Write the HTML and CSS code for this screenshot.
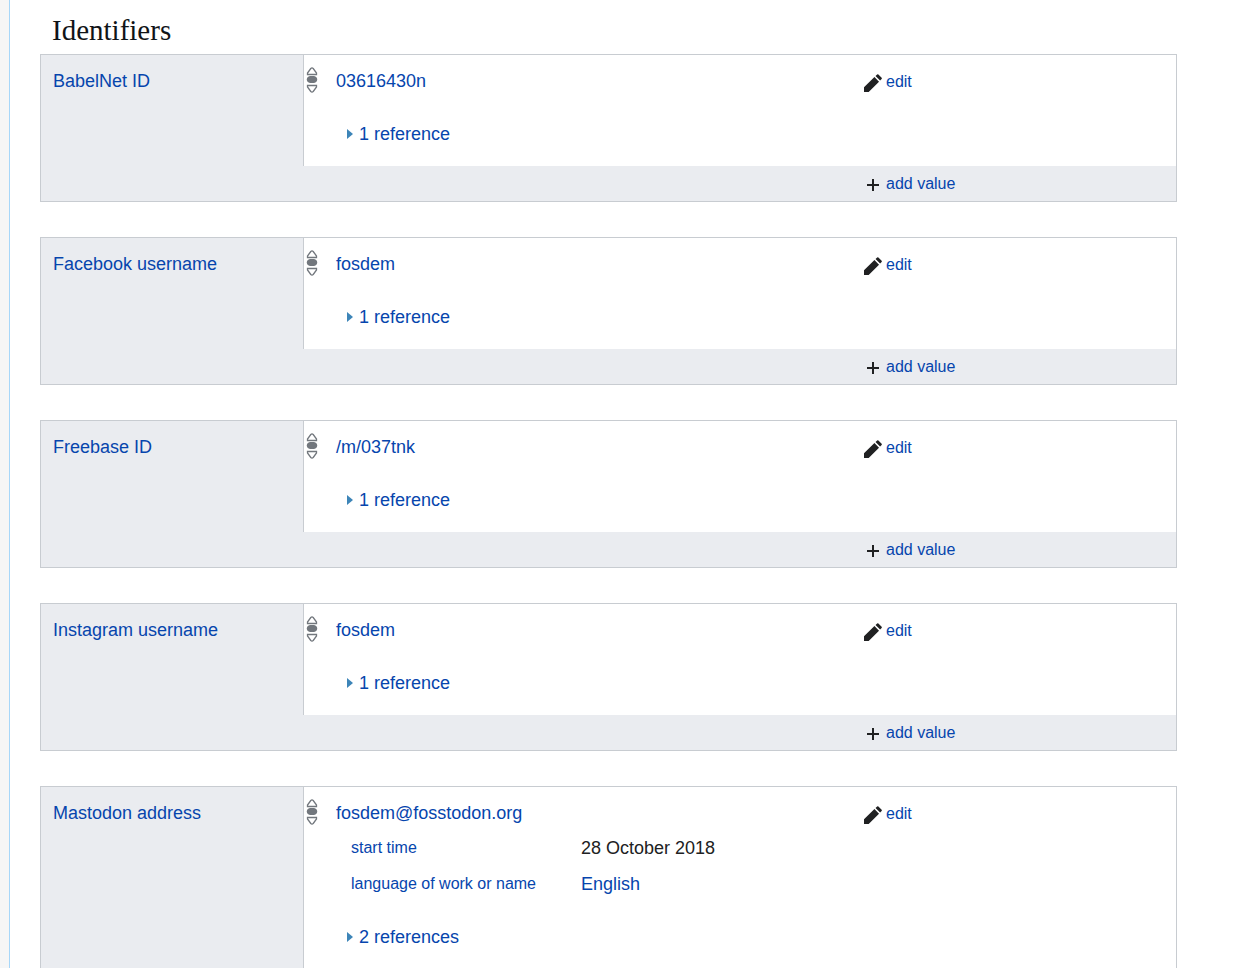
FILE: index.html
```html
<!DOCTYPE html>
<html lang="en">
<head>
    <meta charset="UTF-8">
    <meta name="viewport" content="width=device-width, initial-scale=1.0">
    <title>FOSDEM - Identifiers</title>
    <link rel="stylesheet" href="styles.css">
</head>
<body>
    <!-- Shared icons -->
    <svg class="icon-defs" aria-hidden="true">
        <symbol id="icon-rank" viewBox="0 0 12 26">
            <path d="M1.500 7.500 V6 L4.800 1.500 Q6 .300 7.200 1.500 L10.500 6 V7.500 Z" fill="#fff" stroke="#72777d" stroke-width="1.300"/>
            <path d="M4 9 H8 Q11.200 9.800 11.200 12.500 Q11.200 15.200 8 16 H4 Q.800 15.200 .800 12.500 Q.800 9.800 4 9 Z" fill="#72777d"/>
            <path d="M1.500 18.500 V20 L4.800 24.500 Q6 25.700 7.200 24.500 L10.500 20 V18.500 Z" fill="#fff" stroke="#72777d" stroke-width="1.300"/>
        </symbol>
        <symbol id="icon-edit" viewBox="0 0 20 20">
            <path fill="#202122" d="M0 20 V14.800 L11.600 3.400 L16.700 8.500 L5.200 20 Z M12.800 2.200 L14.600 .500 Q15.300 -.100 16 .500 L19.600 4.100 Q20.200 4.800 19.600 5.500 L17.900 7.300 Z"/>
        </symbol>
        <symbol id="icon-add" viewBox="0 0 18 18">
            <path fill="#202122" d="M8 3h2v5h5v2h-5v5H8v-5H3V8h5z"/>
        </symbol>
        <symbol id="icon-arrow" viewBox="0 0 6 10">
            <path fill="#3d85b8" d="M0 0 L6 5 L0 10 Z"/>
        </symbol>
    </svg>

    <main class="content">
        <h2 class="section-heading">Identifiers</h2>

        <section class="statement-group">
            <div class="property"><a href="#">BabelNet ID</a></div>
            <div class="statement">
                <svg class="rank"><use href="#icon-rank"/></svg>
                <div class="statement-main">
                    <a class="value" href="#">03616430n</a>
                    <a class="references" href="#"><svg class="arrow"><use href="#icon-arrow"/></svg>1 reference</a>
                </div>
                <a class="action" href="#"><svg class="icon"><use href="#icon-edit"/></svg>edit</a>
            </div>
            <div class="add-row">
                <a class="action" href="#"><svg class="icon"><use href="#icon-add"/></svg>add value</a>
            </div>
        </section>

        <section class="statement-group">
            <div class="property"><a href="#">Facebook username</a></div>
            <div class="statement">
                <svg class="rank"><use href="#icon-rank"/></svg>
                <div class="statement-main">
                    <a class="value" href="#">fosdem</a>
                    <a class="references" href="#"><svg class="arrow"><use href="#icon-arrow"/></svg>1 reference</a>
                </div>
                <a class="action" href="#"><svg class="icon"><use href="#icon-edit"/></svg>edit</a>
            </div>
            <div class="add-row">
                <a class="action" href="#"><svg class="icon"><use href="#icon-add"/></svg>add value</a>
            </div>
        </section>

        <section class="statement-group">
            <div class="property"><a href="#">Freebase ID</a></div>
            <div class="statement">
                <svg class="rank"><use href="#icon-rank"/></svg>
                <div class="statement-main">
                    <a class="value" href="#">/m/037tnk</a>
                    <a class="references" href="#"><svg class="arrow"><use href="#icon-arrow"/></svg>1 reference</a>
                </div>
                <a class="action" href="#"><svg class="icon"><use href="#icon-edit"/></svg>edit</a>
            </div>
            <div class="add-row">
                <a class="action" href="#"><svg class="icon"><use href="#icon-add"/></svg>add value</a>
            </div>
        </section>

        <section class="statement-group">
            <div class="property"><a href="#">Instagram username</a></div>
            <div class="statement">
                <svg class="rank"><use href="#icon-rank"/></svg>
                <div class="statement-main">
                    <a class="value" href="#">fosdem</a>
                    <a class="references" href="#"><svg class="arrow"><use href="#icon-arrow"/></svg>1 reference</a>
                </div>
                <a class="action" href="#"><svg class="icon"><use href="#icon-edit"/></svg>edit</a>
            </div>
            <div class="add-row">
                <a class="action" href="#"><svg class="icon"><use href="#icon-add"/></svg>add value</a>
            </div>
        </section>

        <section class="statement-group">
            <div class="property"><a href="#">Mastodon address</a></div>
            <div class="statement">
                <svg class="rank"><use href="#icon-rank"/></svg>
                <div class="statement-main">
                    <a class="value" href="#">fosdem@fosstodon.org</a>
                    <dl class="qualifiers">
                        <dt><a href="#">start time</a></dt>
                        <dd>28 October 2018</dd>
                        <dt><a href="#">language of work or name</a></dt>
                        <dd><a href="#">English</a></dd>
                    </dl>
                    <a class="references" href="#"><svg class="arrow"><use href="#icon-arrow"/></svg>2 references</a>
                </div>
                <a class="action" href="#"><svg class="icon"><use href="#icon-edit"/></svg>edit</a>
            </div>
        </section>
    </main>
</body>
</html>
```
FILE: styles.css
```css
* {
    box-sizing: border-box;
}
body {
    margin: 0;
    padding-left: 9px;
    background-color: #f6f6f6;
    color: #202122;
    font-family: "Liberation Sans", Arial, sans-serif;
    font-size: 18px;
    line-height: 24px;
}
a {
    color: #0645ad;
    text-decoration: none;
}
a:hover {
    text-decoration: underline;
}
.icon-defs {
    display: none;
}
.content {
    min-height: 100vh;
    padding: 12px 65px 0 30px;
    background-color: #fff;
    border-left: 1px solid #a7d7f9;
}
.section-heading {
    margin: 0;
    padding: 0 12px 6px;
    color: #101418;
    font-family: Georgia, "Liberation Serif", serif;
    font-size: 29px;
    font-weight: normal;
    line-height: 36px;
}
.statement-group {
    display: grid;
    grid-template-columns: 263px 1fr;
    margin-bottom: 35px;
    background-color: #eaecf0;
    border: 1px solid #c8ccd1;
}
.statement-group:last-child {
    margin-bottom: 0;
}
.property {
    padding: 14px 12px;
}
.statement {
    display: grid;
    grid-template-columns: 32px 1fr 312px;
    align-items: start;
    margin-left: -1px;
    padding: 14px 0 20px;
    background-color: #fff;
    border-left: 1px solid #c8ccd1;
}
.rank {
    width: 12px;
    height: 26px;
    margin: -2px 0 0 2px;
}
.statement-main {
    display: flex;
    flex-direction: column;
    align-items: flex-start;
}
.qualifiers {
    display: grid;
    grid-template-columns: 230px 1fr;
    row-gap: 12px;
    margin: 11px 0 0 15px;
}
.qualifiers dt {
    font-size: 16px;
}
.qualifiers dd {
    margin: 0;
}
.references {
    display: flex;
    align-items: center;
    gap: 6px;
    margin: 29px 0 0 11px;
}
.arrow {
    width: 6px;
    height: 10px;
}
.action {
    display: flex;
    align-items: center;
    gap: 4px;
    font-size: 16px;
    line-height: 26px;
}
.icon {
    width: 18px;
    height: 18px;
    margin-top: 1px;
}
.add-row {
    grid-column: 1 / -1;
    display: grid;
    grid-template-columns: 312px;
    justify-content: end;
    padding: 5px 0 4px;
}
```
